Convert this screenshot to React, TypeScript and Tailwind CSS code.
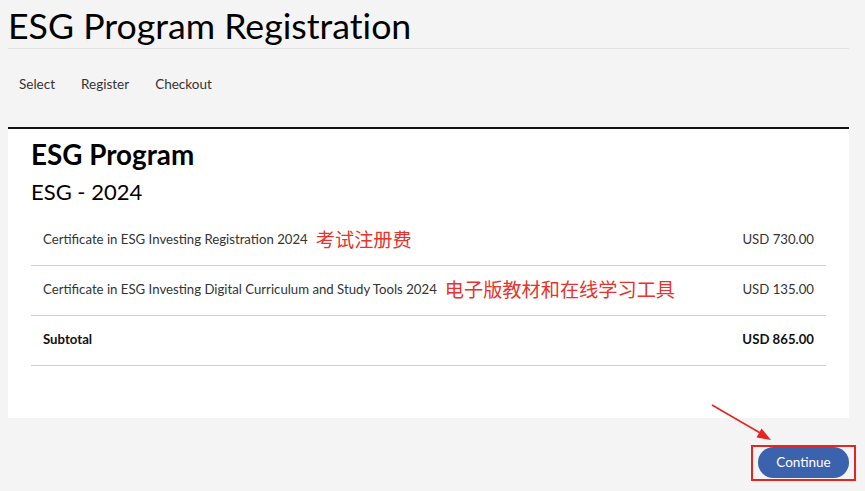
import React from 'react';

const items = [
    { name: 'Certificate in ESG Investing Registration 2024', note: '考试注册费', price: 'USD 730.00' },
    { name: 'Certificate in ESG Investing Digital Curriculum and Study Tools 2024', note: '电子版教材和在线学习工具', price: 'USD 135.00' },
];

export default function App() {
    return (
        <div className="min-h-screen bg-[#f4f4f4] font-['Lato','Noto_Sans',sans-serif] text-[#222]">
            <div className="relative ml-2 w-[841px]">
                <h1 className="pt-[5px] text-[35.7px] leading-[1.2] font-normal text-black border-b border-[#e2e2e2] [font-variant-ligatures:no-common-ligatures]">
                    ESG Program Registration
                </h1>

                <nav className="flex gap-[26px] pl-[11px] mt-[25px] text-[13.5px] leading-5 text-[#333]">
                    <span>Select</span>
                    <span>Register</span>
                    <span>Checkout</span>
                </nav>

                <div className="mt-[33px] bg-white border-t-2 border-[#111] px-[23px] pt-[9px] pb-[52px]">
                    <h2 className="text-[27.8px] leading-[1.2] font-bold text-black">ESG Program</h2>
                    <h3 className="mt-[8px] text-[22px] leading-[1.2] font-normal text-black">ESG - 2024</h3>

                    <div className="mt-[10px]">
                        {items.map(item => (
                            <div key={item.price} className="flex h-[50px] items-center justify-between border-b border-[#cfcfcf] px-3 text-[13.2px] text-[#333]">
                                <div className="flex items-center gap-2">
                                    <span>{item.name}</span>
                                    <span className="font-['Noto_Sans_CJK_SC',sans-serif] text-[19.2px] leading-none text-[#e8322b]">{item.note}</span>
                                </div>
                                <span>{item.price}</span>
                            </div>
                        ))}
                        <div className="flex h-[50px] items-center justify-between border-b border-[#cfcfcf] px-3 text-[13.2px] font-bold text-[#111]">
                            <span>Subtotal</span>
                            <span>USD 865.00</span>
                        </div>
                    </div>
                </div>

                <div className="flex justify-end mt-[29px]">
                    <button className="h-[31px] w-[91px] rounded-full bg-[#3a62ad] text-[13.5px] text-white">
                        Continue
                    </button>
                </div>

                {/* annotation: red box + arrow */}
                <div className="absolute left-[743px] top-[445px] h-[36px] w-[105px] border-2 border-[#e52620]" />
                <svg className="absolute left-[696px] top-[401px]" width="80" height="52" viewBox="0 0 80 52">
                    <line x1="8" y1="4" x2="58" y2="33" stroke="#e52620" strokeWidth="1.6" />
                    <polygon points="67,39 52.5,36.5 57.5,27.5" fill="#e52620" />
                </svg>
            </div>
        </div>
    );
}
